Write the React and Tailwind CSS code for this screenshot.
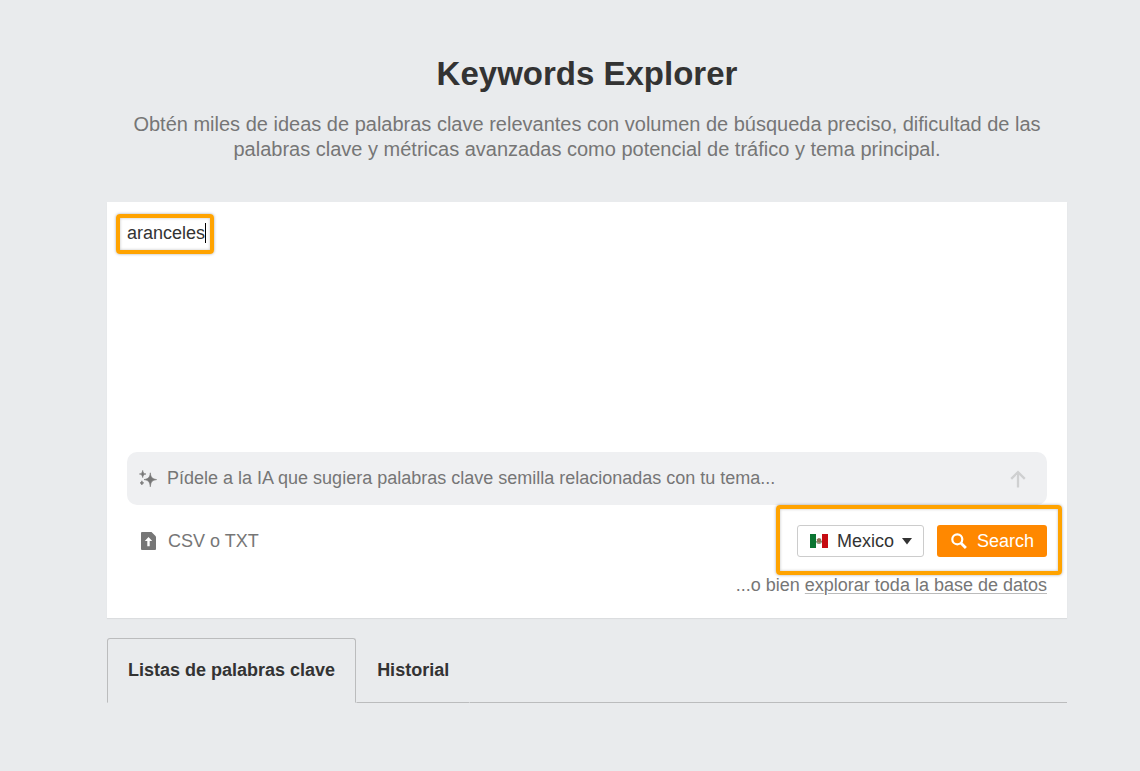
import { useState } from 'react';

const TABS = ['Listas de palabras clave', 'Historial'];

function SparklesIcon() {
  return (
    <svg
      className="w-[18px] h-[18px] shrink-0"
      viewBox="0 0 18 18"
      fill="#767676"
      stroke="#767676"
      strokeWidth="0.6"
      strokeLinejoin="round"
      aria-hidden="true"
    >
      <path d="M11.300 2.800C11.900 7.600 13 8.700 17.600 9.600 13 10.500 11.900 11.700 11.300 16.800 10.700 11.700 9.600 10.500 5 9.600 9.600 8.700 10.700 7.600 11.300 2.800z" />
      <path d="M3.700.4C4.100 3 4.700 3.600 7 4 4.700 4.400 4.100 5 3.700 7.600 3.300 5 2.700 4.400.4 4 2.700 3.600 3.300 3 3.700.4z" />
      <path d="M2.900 10.800C3.300 12.200 3.500 12.500 4.800 12.900 3.500 13.300 3.300 13.600 2.900 15 2.500 13.600 2.300 13.300 1 12.900 2.300 12.500 2.500 12.200 2.900 10.800z" />
    </svg>
  );
}

function UploadIcon() {
  return (
    <svg className="w-[15px] h-[18px] shrink-0" viewBox="0 0 15 18" aria-hidden="true">
      <path d="M1 0h9.500L15 4.500V17a1 1 0 0 1-1 1H1a1 1 0 0 1-1-1V1a1 1 0 0 1 1-1z" fill="#767676" />
      <path d="M7.500 5L11.200 9H8.700v5.200H6.300V9H3.800z" fill="#fff" />
    </svg>
  );
}

function ArrowUpIcon() {
  return (
    <svg className="w-4 h-[18px]" viewBox="0 0 16 18" fill="none" stroke="#cfd0d1" strokeWidth="2.300" aria-hidden="true">
      <path d="M8 17.500V2.500M1.200 8.900L8 2.100l6.800 6.800" />
    </svg>
  );
}

function MexicoFlag() {
  return (
    <svg className="absolute left-[13px] top-[9px] w-[18px] h-[14px] pointer-events-none" viewBox="0 0 18 14" aria-hidden="true">
      <path fill="#fff" d="M0 0h18v14H0z" />
      <path fill="#0b7532" d="M0 0h6v14H0z" />
      <path fill="#c60c12" d="M12 0h6v14h-6z" />
      <path d="M6.600 7a2.400 2.400 0 0 0 4.800 0" fill="none" stroke="#7f9a7b" strokeWidth="1.200" />
      <path d="M6.700 5.200l2.100-1.200 2.200.8.500 2.700-2 1.500-2.300-.8z" fill="#8f6f56" />
    </svg>
  );
}

function SearchIcon() {
  return (
    <svg className="w-4 h-4" viewBox="0 0 16 16" fill="none" stroke="#fff" aria-hidden="true">
      <circle cx="6.300" cy="6.300" r="5" strokeWidth="2.200" />
      <path d="M9.900 9.900l5 5" strokeWidth="2.800" />
    </svg>
  );
}

function Highlight({ className, children }) {
  return (
    <div
      className={`absolute pointer-events-none rounded-[4px] border-4 border-[#ffa300] shadow-[0_0_3px_rgba(0,0,0,0.35),inset_0_0_3px_rgba(0,0,0,0.25)] ${className}`}
    >
      {children}
    </div>
  );
}

function SearchPanel() {
  const [keywords, setKeywords] = useState('aranceles');
  const [prompt, setPrompt] = useState('');

  return (
    <form
      className="relative mt-10 bg-white px-5 pb-[21px] shadow-[0_1px_1px_rgba(0,0,0,0.06)]"
      onSubmit={(e) => e.preventDefault()}
    >
      <textarea
        aria-label="Palabras clave"
        className="block w-full h-[250px] pt-[19px] resize-none outline-none text-[#333]"
        value={keywords}
        onChange={(e) => setKeywords(e.target.value)}
      />
      <Highlight className="left-[9px] top-3 w-[98px] h-10">
        <span className="absolute right-1 top-[5px] w-px h-5 bg-black" />
      </Highlight>

      <div className="flex items-center h-[53px] pl-3 pr-[21px] rounded-[10px] bg-[#eff0f2]">
        <SparklesIcon />
        <input
          type="text"
          aria-label="Sugerencias de la IA"
          className="flex-1 min-w-0 mx-[10px] pb-0.5 outline-none text-[#333] placeholder:text-[#767676]"
          placeholder="Pídele a la IA que sugiera palabras clave semilla relacionadas con tu tema..."
          value={prompt}
          onChange={(e) => setPrompt(e.target.value)}
        />
        <button type="button" aria-label="Enviar">
          <ArrowUpIcon />
        </button>
      </div>

      <div className="flex items-center justify-between mt-5">
        <button type="button" className="flex items-center gap-3 pl-[14px] text-[#767676]">
          <UploadIcon />
          CSV o TXT
        </button>
        <div className="flex gap-[13px]">
          <div className="relative">
            <select
              aria-label="País"
              className="appearance-none block w-[127px] h-8 pl-[39px] border border-[#ccc] rounded-[3px] bg-white text-[#333] outline-none"
            >
              <option>Mexico</option>
            </select>
            <MexicoFlag />
            <svg className="absolute right-3 top-[13px] w-[10px] h-[7px] pointer-events-none" viewBox="0 0 10 7" aria-hidden="true">
              <path fill="#333" d="M0 0h10L5 6.500z" />
            </svg>
          </div>
          <button type="submit" className="flex items-center gap-[10px] h-8 pl-[14px] pr-[13px] rounded-[3px] bg-[#ff8800] text-white">
            <SearchIcon />
            Search
          </button>
        </div>
      </div>

      <p className="mt-4 text-right text-[#767676]">
        ...o bien{' '}
        <a href="#database" className="underline decoration-[#bbb] decoration-1 underline-offset-2">
          explorar toda la base de datos
        </a>
      </p>
      <Highlight className="right-[5px] bottom-[43px] w-[286px] h-[70px]" />
    </form>
  );
}

export default function App() {
  const [active, setActive] = useState(0);

  return (
    <main className="min-h-screen bg-[#e9ebed] pt-[54px] pl-[107px] pr-[73px] font-['Liberation_Sans',Arial,sans-serif] text-[18px] leading-6">
      <h1 className="text-center text-[33px] leading-10 font-bold text-[#333]">Keywords Explorer</h1>
      <p className="mt-[18px] px-5 text-center text-[20px] leading-[25px] text-[#767676]">
        Obtén miles de ideas de palabras clave relevantes con volumen de búsqueda preciso, dificultad de las palabras
        clave y métricas avanzadas como potencial de tráfico y tema principal.
      </p>

      <SearchPanel />

      <div className="flex mt-5" role="tablist">
        {TABS.map((tab, i) => (
          <button
            key={tab}
            type="button"
            role="tab"
            aria-selected={i === active}
            onClick={() => setActive(i)}
            className={`h-[65px] px-5 pb-0.5 border font-bold text-[#333] ${
              i === active ? 'rounded-t-[3px] border-[#bbbcbd] border-b-transparent' : 'border-transparent border-b-[#bbbcbd]'
            }`}
          >
            {tab}
          </button>
        ))}
        <div className="flex-1 border-b border-[#bbbcbd]" />
      </div>
    </main>
  );
}
